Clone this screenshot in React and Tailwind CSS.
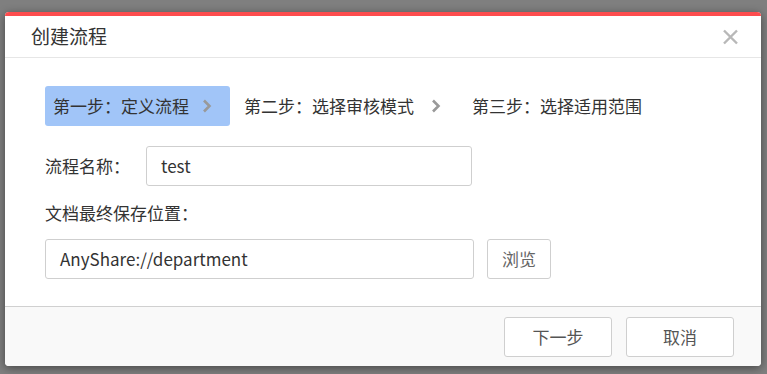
import React from "react";

function Chevron({ className }) {
  return (
    <svg width="10" height="14" viewBox="0 0 10 14" className={className}>
      <path d="M2 1.5 L7.5 7 L2 12.5" fill="none" stroke="#999" strokeWidth="2.6" />
    </svg>
  );
}

export default function App() {
  return (
    <div
      className="w-[767px] h-[374px] bg-[#7f7f7f] pt-[12px] pl-[5px] overflow-hidden [text-spacing-trim:space-all]"
      style={{ fontFamily: '"Noto Sans CJK SC", "Noto Sans", sans-serif' }}
    >
      <div className="w-[756px] h-[354px] bg-white rounded-[4px] overflow-hidden shadow-[0_2px_10px_rgba(0,0,0,0.45)] flex flex-col">
        {/* header */}
        <div className="h-[4px] bg-[#fd4c4e]" />
        <div className="h-[42px] flex items-center justify-between pl-[26px] pr-[22px] border-b border-[#e6e6e6]">
          <span className="text-[19px] text-[#333]">创建流程</span>
          <svg width="17" height="16" viewBox="0 0 17 16">
            <path d="M2 1.5 L15 14.5 M15 1.5 L2 14.5" stroke="#b8b8b8" strokeWidth="2.4" />
          </svg>
        </div>

        {/* body */}
        <div className="flex-1 pl-[40px] pt-[28px]">
          <div className="flex items-center text-[17px] text-[#333]">
            <div className="h-[40px] w-[185px] bg-[#a1c5f8] rounded-[3px] flex items-center pl-[8px]">
              第一步：定义流程
              <Chevron className="ml-[13px]" />
            </div>
            <div className="flex items-center ml-[14px]">
              第二步：选择审核模式
              <Chevron className="ml-[17px]" />
            </div>
            <div className="ml-[31px]">第三步：选择适用范围</div>
          </div>

          <div className="flex items-center mt-[20px] text-[17px] text-[#333]">
            <span className="w-[101px]">流程名称：</span>
            <div className="w-[326px] h-[40px] border border-[#cfcfcf] rounded-[3px] flex items-center pl-[14px] text-[17px] text-[#333]">
              test
            </div>
          </div>

          <div className="mt-[16px] text-[17px] text-[#333] leading-[22px]">文档最终保存位置：</div>

          <div className="flex items-center mt-[15px]">
            <div className="w-[429px] h-[40px] border border-[#cfcfcf] rounded-[3px] flex items-center pl-[14px] text-[17px] text-[#333]">
              AnyShare://department
            </div>
            <div className="ml-[13px] w-[64px] h-[40px] border border-[#cfcfcf] rounded-[3px] flex items-center justify-center text-[17px] text-[#666]">
              浏览
            </div>
          </div>
        </div>

        {/* footer */}
        <div className="h-[60px] bg-[#f9f9f9] border-t border-[#d0d0d0] flex items-center justify-end pr-[27px] gap-[14px]">
          <div className="w-[108px] h-[40px] bg-white border border-[#cfcfcf] rounded-[3px] flex items-center justify-center text-[17px] text-[#555]">
            下一步
          </div>
          <div className="w-[108px] h-[40px] bg-white border border-[#cfcfcf] rounded-[3px] flex items-center justify-center text-[17px] text-[#555]">
            取消
          </div>
        </div>
      </div>
    </div>
  );
}
